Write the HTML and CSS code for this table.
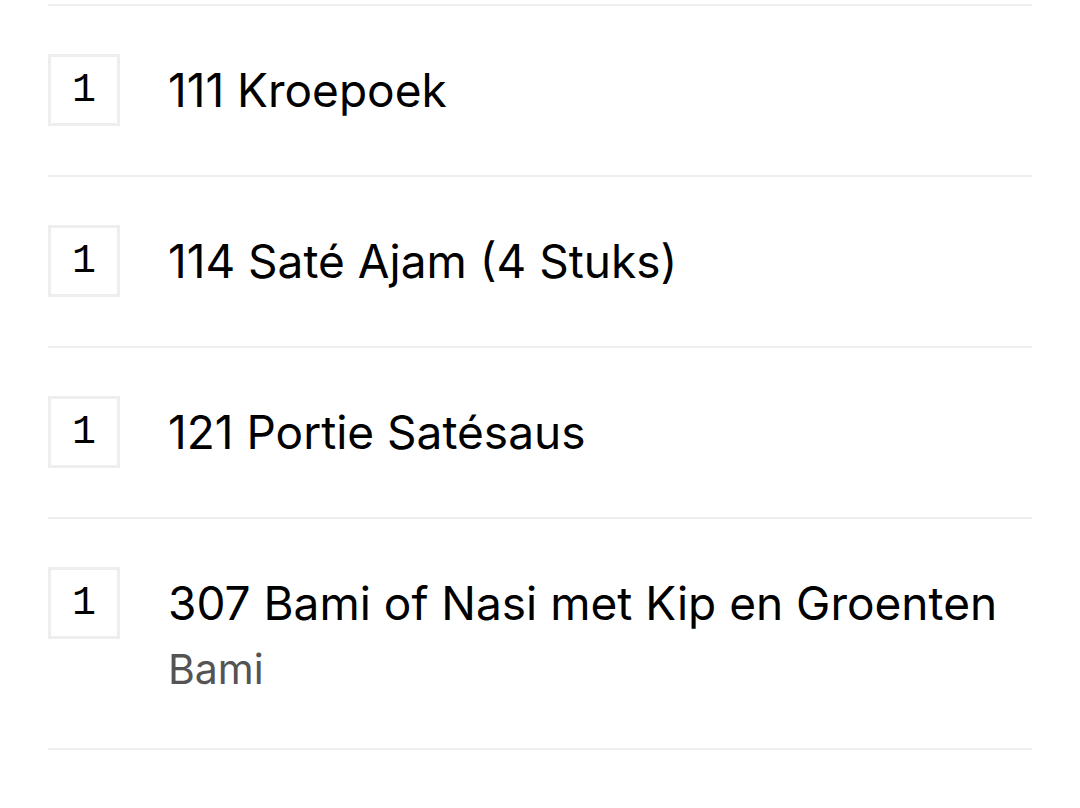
FILE: index.html
```html
<!DOCTYPE html>
<html>
<head>
<meta charset="utf-8">
<link rel="stylesheet" href="styles.css">
</head>
<body>
<ul class="list">
  <li class="row">
    <div class="qty">1</div>
    <div class="info"><div class="title">111 Kroepoek</div></div>
  </li>
  <li class="row">
    <div class="qty">1</div>
    <div class="info"><div class="title">114 Saté Ajam (4 Stuks)</div></div>
  </li>
  <li class="row">
    <div class="qty">1</div>
    <div class="info"><div class="title">121 Portie Satésaus</div></div>
  </li>
  <li class="row">
    <div class="qty">1</div>
    <div class="info">
      <div class="title">307 Bami of Nasi met Kip en Groenten</div>
      <div class="sub">Bami</div>
    </div>
  </li>
</ul>
</body>
</html>
```
FILE: styles.css
```css
html, body {
  margin: 0;
  padding: 0;
  background: #ffffff;
}
body {
  font-family: "Inter", "Open Sans", sans-serif;
  color: #000000;
}
.list {
  list-style: none;
  margin: 0 48px;
  padding: 0;
  padding-top: 4px;
}
.row {
  display: flex;
  align-items: flex-start;
  gap: 48px;
  padding: 48px 0 49px;
  border-top: 2px solid #eeeeee;
}
.row:last-child {
  border-bottom: 2px solid #eeeeee;
}
.qty {
  box-sizing: border-box;
  width: 72px;
  height: 72px;
  flex: none;
  border: 3px solid #eeeeee;
  display: flex;
  align-items: center;
  justify-content: center;
  font-family: "Liberation Mono", "DejaVu Sans Mono", monospace;
  font-size: 40px;
  color: #000000;
}
.info {
  display: flex;
  flex-direction: column;
}
.title {
  font-size: 46px;
  line-height: 72px;
}
.sub {
  font-size: 41px;
  line-height: 60px;
  color: #545454;
}
```
